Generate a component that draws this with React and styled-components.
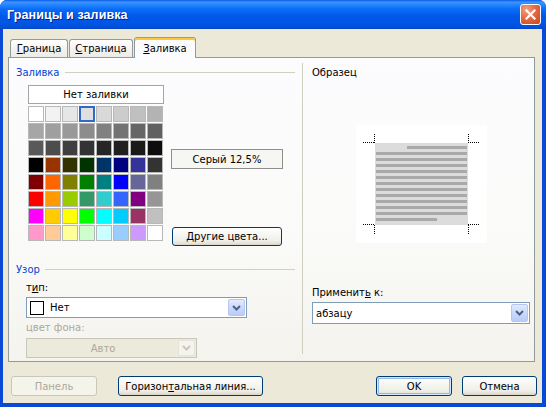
import styled, { createGlobalStyle } from "styled-components";

const GlobalStyle = createGlobalStyle`
  html, body { margin: 0; padding: 0; background: #ffffff; }
  body {
    font-family: "DejaVu Sans", Tahoma, sans-serif;
    font-size: 10px;
    color: #000;
  }
  * { box-sizing: border-box; }
`;

const palette = [
  ['#FFFFFF', '#F2F2F2', '#E6E6E6', '#DFDFDF', '#D9D9D9', '#CCCCCC', '#C0C0C0', '#B3B3B3'],
  ['#A6A6A6', '#9F9F9F', '#999999', '#8C8C8C', '#808080', '#737373', '#666666', '#606060'],
  ['#595959', '#4D4D4D', '#404040', '#333333', '#262626', '#202020', '#1A1A1A', '#0D0D0D'],
  ['#000000', '#993300', '#333300', '#003300', '#003366', '#000080', '#333399', '#333333'],
  ['#800000', '#FF6600', '#808000', '#008000', '#008080', '#0000FF', '#666699', '#808080'],
  ['#FF0000', '#FF9900', '#99CC00', '#339966', '#33CCCC', '#3366FF', '#800080', '#969696'],
  ['#FF00FF', '#FFCC00', '#FFFF00', '#00FF00', '#00FFFF', '#00CCFF', '#993366', '#C0C0C0'],
  ['#FF99CC', '#FFCC99', '#FFFF99', '#CCFFCC', '#CCFFFF', '#99CCFF', '#CC99FF', '#FFFFFF'],
];

const Window = styled.div`
  width: 546px;
  height: 407px;
  display: flex;
  flex-direction: column;
  background: #0A48D6;
  border-radius: 7px 7px 0 0;
  overflow: hidden;
`;

const TitleBar = styled.div`
  height: 29px;
  flex: none;
  display: flex;
  align-items: center;
  justify-content: space-between;
  padding: 0 5px 0 7px;
  background: linear-gradient(180deg, #0A5BE6 0%, #3D95FF 7%, #2686FF 16%, #0A6CF8 32%, #0059E9 55%, #0055E3 82%, #0050DA 94%, #0A42C0 100%);
`;

const Title = styled.div`
  font-family: "Liberation Sans", Arial, sans-serif;
  font-weight: bold;
  font-size: 12.5px;
  color: #ffffff;
  text-shadow: 1px 1px 0 #0A1E8C;
  letter-spacing: 0.1px;
`;

const CloseBtn = styled.div`
  width: 21px;
  height: 21px;
  border: 1px solid #ffffff;
  border-radius: 3px;
  background: radial-gradient(circle at 30% 25%, #F0A286 0%, #E36A45 45%, #C8431E 100%);
  display: flex;
  align-items: center;
  justify-content: center;
`;

const Client = styled.div`
  flex: 1;
  margin: 0 4px 4px 3px;
  background: #ECE9D8;
  display: flex;
  flex-direction: column;
  padding: 8px 7px 0 5px;
`;

const TabStrip = styled.div`
  height: 20px;
  display: flex;
  align-items: flex-end;
  padding-left: 2px;
`;

const Tab = styled.div`
  width: ${p => p.$w}px;
  height: ${p => (p.$active ? 21 : 18)}px;
  margin-right: 1px;
  margin-bottom: ${p => (p.$active ? '-1px' : '0')};
  border: 1px solid #919B9C;
  border-bottom: none;
  border-top-color: ${p => (p.$active ? '#E68B2C' : '#919B9C')};
  border-radius: 3px 3px 0 0;
  background: ${p => (p.$active ? '#FCFCFE' : 'linear-gradient(180deg, #FFFFFF 0%, #F5F4F0 50%, #ECEBE5 100%)')};
  box-shadow: ${p => (p.$active ? 'inset 0 2px 0 #FFC83C' : 'none')};
  display: flex;
  align-items: center;
  justify-content: center;
  padding-top: ${p => (p.$active ? '1px' : '0')};
  position: relative;
  z-index: ${p => (p.$active ? 2 : 0)};
`;

const Panel = styled.div`
  height: 305px;
  border: 1px solid #919B9C;
  background: linear-gradient(180deg, #FCFCFE 0%, #FAFAF8 60%, #F4F3EE 100%);
  display: flex;
`;

const LeftCol = styled.div`
  width: 293px;
  padding: 8px 7px 0 7px;
  display: flex;
  flex-direction: column;
`;

const RightCol = styled.div`
  flex: 1;
  margin: 5px 0 7px;
  border-left: 1px solid #D0CEBF;
  padding: 3px 0 0 9px;
  display: flex;
  flex-direction: column;
`;

const GroupHead = styled.div`
  height: 13px;
  display: flex;
  align-items: center;
  gap: 5px;
  color: #0046D5;
  margin-top: ${p => p.$top || 0}px;
  &::after {
    content: "";
    flex: 1;
    height: 1px;
    background: #D0D0BF;
  }
`;

const FillRow = styled.div`
  display: flex;
  gap: 7px;
  margin-top: 6px;
  padding-left: 12px;
`;

const PaletteCol = styled.div`
  width: 136px;
  display: flex;
  flex-direction: column;
`;

const NoFillBox = styled.div`
  height: 19px;
  border: 1px solid #A5A5A5;
  background: #ffffff;
  display: flex;
  align-items: center;
  justify-content: center;
  margin-bottom: 2px;
`;

const ColorGrid = styled.div`
  display: grid;
  grid-template-columns: repeat(8, 16px);
  grid-auto-rows: 16px;
  gap: 1px;
`;

const Swatch = styled.div`
  background: ${p => p.$color};
  border: ${p => (p.$selected ? '2px solid #316AC5' : '1px solid #B8B8B8')};
`;

const ShadeCol = styled.div`
  width: 112px;
  display: flex;
  flex-direction: column;
  padding-top: 64px;
`;

const ShadeName = styled.div`
  height: 20px;
  border: 1px solid #8E8E8E;
  background: #F6F6F3;
  display: flex;
  align-items: center;
  justify-content: center;
`;

const XpButton = styled.button`
  width: ${p => p.$w}px;
  height: ${p => p.$h || 20}px;
  margin-top: ${p => p.$top || 0}px;
  margin-left: ${p => p.$left || 0}px;
  font: inherit;
  padding: 0;
  border: 1px solid ${p => (p.disabled ? '#C9C7BA' : '#003C74')};
  border-radius: 3px;
  background: ${p => (p.disabled ? '#F5F4EA' : 'linear-gradient(180deg, #FFFFFF 0%, #F7F7F4 35%, #EFEEE8 75%, #E3E0D6 92%, #D6D0C5 100%)')};
  color: ${p => (p.disabled ? '#ACA899' : '#000')};
  box-shadow: ${p => (p.$default ? 'inset 0 0 0 1px #CEE7FF, inset 0 0 0 2px #98B8EA' : 'none')};
`;

const FieldBlock = styled.div`
  display: flex;
  flex-direction: column;
  padding-left: ${p => p.$indent || 0}px;
  margin-top: ${p => p.$top || 0}px;
`;

const FieldLabel = styled.div`
  height: 13px;
  line-height: 13px;
  color: ${p => (p.$disabled ? '#ACA899' : '#000')};
  margin-bottom: ${p => p.$gap || 3}px;
  margin-top: ${p => p.$top || 0}px;
`;

const Combo = styled.div`
  width: ${p => p.$w}px;
  height: ${p => p.$h || 21}px;
  border: 1px solid ${p => (p.$disabled ? '#C9C7BA' : '#7F9DB9')};
  background: ${p => (p.$disabled ? '#ECEADB' : '#FFFFFF')};
  display: flex;
  align-items: stretch;
  padding: 1px;
`;

const ComboValue = styled.div`
  flex: 1;
  display: flex;
  align-items: center;
  gap: 6px;
  padding-left: ${p => (p.$center ? 0 : 2)}px;
  justify-content: ${p => (p.$center ? 'center' : 'flex-start')};
  color: ${p => (p.$disabled ? '#ACA899' : '#000')};
`;

const ComboArrow = styled.div`
  width: 17px;
  border-radius: 2px;
  border: 1px solid ${p => (p.$disabled ? '#E6E4D8' : '#B4C7F3')};
  background: ${p => (p.$disabled ? '#F4F3EE' : 'linear-gradient(180deg, #E2EBFE 0%, #CCDAFC 45%, #B9CCF8 100%)')};
  display: flex;
  align-items: center;
  justify-content: center;
`;

const PatternSwatch = styled.div`
  width: 14px;
  height: 14px;
  border: 1px solid #000;
  background: #fff;
`;

const SampleLabel = styled.div`
  height: 13px;
  line-height: 13px;
`;

const PreviewFrame = styled.div`
  margin: 46px 0 0 44px;
  width: 131px;
  height: 118px;
`;

const Footer = styled.div`
  display: flex;
  align-items: center;
  margin: 14px -2px 0 0;
  padding-left: 3px;
`;

const Spacer = styled.div`
  flex: 1;
`;

const Chevron = ({ disabled }) => (
  <svg width="9" height="6" viewBox="0 0 9 6">
    <path d="M1 1 L4.5 4.5 L8 1" fill="none" stroke={disabled ? '#C9C7BA' : '#4D6185'} strokeWidth="2" />
  </svg>
);

const Preview = () => {
  const lines = [];
  for (let i = 0; i < 13; i++) {
    const x1 = i === 0 ? 51 : 20;
    const x2 = i === 12 ? 81 : 111;
    lines.push(<rect key={i} x={x1} y={21 + i * 6} width={x2 - x1} height={3} fill="#A9A9A9" />);
  }
  const dot = { stroke: '#000', strokeWidth: 1, strokeDasharray: '1 1', fill: 'none' };
  return (
    <svg width="131" height="118" viewBox="0 0 131 118">
      <rect x="0" y="0" width="131" height="118" fill="#fff" />
      <rect x="19" y="18" width="93" height="82" fill="#DCDCDC" />
      {lines}
      <path d="M7 17.5 H19 M18.5 9 V18" {...dot} />
      <path d="M112 17.5 H124 M112.5 9 V18" {...dot} />
      <path d="M7 99.5 H19 M18.5 100 V109" {...dot} />
      <path d="M112 99.5 H124 M112.5 100 V109" {...dot} />
    </svg>
  );
};

export default function App() {
  return (
    <>
      <GlobalStyle />
      <Window>
        <TitleBar>
          <Title>Границы и заливка</Title>
          <CloseBtn>
            <svg width="11" height="11" viewBox="0 0 11 11">
              <path d="M1.5 1.5 L9.5 9.5 M9.5 1.5 L1.5 9.5" stroke="#fff" strokeWidth="2.2" strokeLinecap="square" />
            </svg>
          </CloseBtn>
        </TitleBar>

        <Client>
          <TabStrip>
            <Tab $w={58}><span><u>Г</u>раница</span></Tab>
            <Tab $w={64}><span><u>С</u>траница</span></Tab>
            <Tab $w={62} $active><span><u>З</u>аливка</span></Tab>
          </TabStrip>

          <Panel>
            <LeftCol>
              <GroupHead>Заливка</GroupHead>
              <FillRow>
                <PaletteCol>
                  <NoFillBox>Нет заливки</NoFillBox>
                  <ColorGrid>
                    {palette.map((row, r) =>
                      row.map((c, i) => (
                        <Swatch key={r + '-' + i} $color={c} $selected={r === 0 && i === 3} />
                      ))
                    )}
                  </ColorGrid>
                </PaletteCol>
                <ShadeCol>
                  <ShadeName>Серый 12,5%</ShadeName>
                  <XpButton $w={110} $h={19} $top={58} $left={1}><u>Д</u>ругие цвета...</XpButton>
                </ShadeCol>
              </FillRow>

              <GroupHead $top={17}>Узор</GroupHead>
              <FieldBlock $indent={10} $top={5}>
                <FieldLabel>т<u>и</u>п:</FieldLabel>
                <Combo $w={221}>
                  <ComboValue>
                    <PatternSwatch />
                    Нет
                  </ComboValue>
                  <ComboArrow><Chevron /></ComboArrow>
                </Combo>
                <FieldLabel $disabled $top={3} $gap={4}>цвет фона:</FieldLabel>
                <Combo $w={171} $h={20} $disabled>
                  <ComboValue $center $disabled>Авто</ComboValue>
                  <ComboArrow $disabled><Chevron disabled /></ComboArrow>
                </Combo>
              </FieldBlock>
            </LeftCol>

            <RightCol>
              <SampleLabel>Образец</SampleLabel>
              <PreviewFrame>
                <Preview />
              </PreviewFrame>
              <FieldLabel $top={43} $gap={3}>Применит<u>ь</u> к:</FieldLabel>
              <Combo $w={218} $h={22}>
                <ComboValue>абзацу</ComboValue>
                <ComboArrow><Chevron /></ComboArrow>
              </Combo>
            </RightCol>
          </Panel>

          <Footer>
            <XpButton $w={86} disabled>Панель</XpButton>
            <XpButton $w={145} $left={21}>Горизон<u>т</u>альная линия...</XpButton>
            <Spacer />
            <XpButton $w={76} $default>OK</XpButton>
            <XpButton $w={75} $left={10}>Отмена</XpButton>
          </Footer>
        </Client>
      </Window>
    </>
  );
}
